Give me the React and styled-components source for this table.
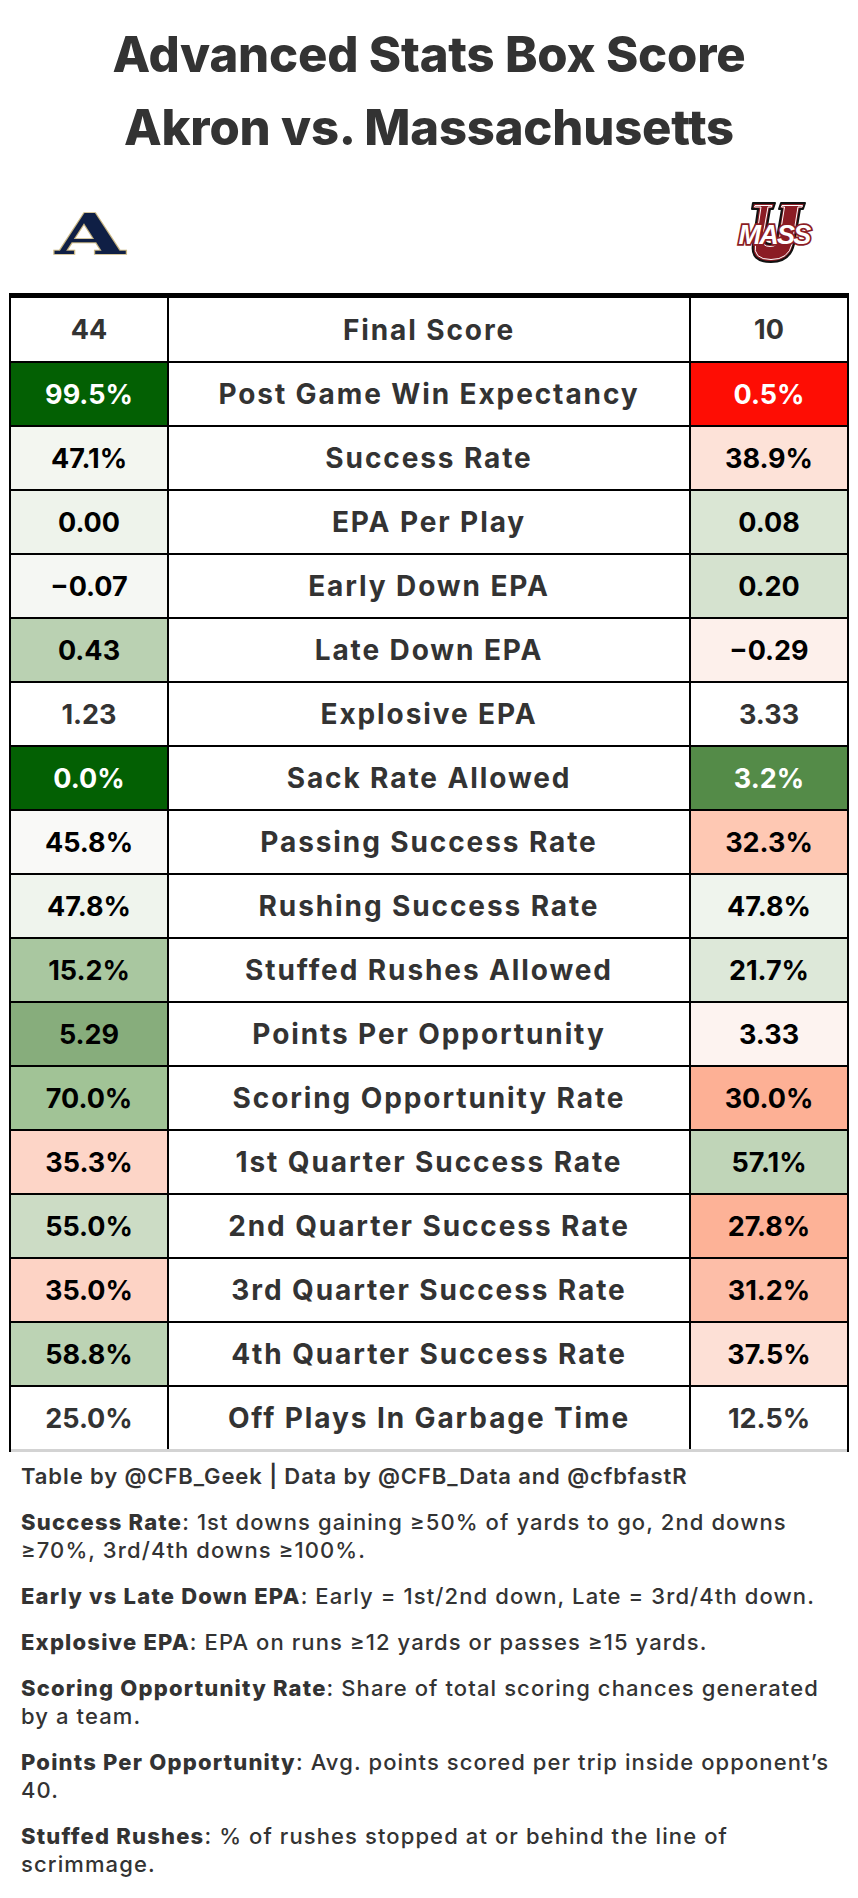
import React from "react";
import styled, { createGlobalStyle } from "styled-components";

const Global = createGlobalStyle`
  html, body { margin: 0; padding: 0; background: #ffffff; }
  body { font-family: Inter, "Open Sans", sans-serif; color: #333333; }
`;

const Page = styled.div`
  width: 858px;
  background: #fff;
  padding-bottom: 20px;
`;

const Title = styled.h1`
  margin: 0;
  padding-top: 18px;
  text-align: center;
  font-family: Inter, sans-serif;
  font-weight: 800;
  font-size: 49px;
  line-height: 73px;
  color: #333;
  letter-spacing: -0.2px;
`;

const LogoRow = styled.div`
  display: flex;
  justify-content: space-between;
  align-items: center;
  height: 129px;
  padding: 8px 44px 0 50px;
  box-sizing: border-box;
`;

const Table = styled.div`
  margin: 0 9px;
  width: 840px;
  box-sizing: border-box;
  border-top: 5px solid #000;
  border-left: 2px solid #000;
  border-right: 2px solid #000;
`;

const Row = styled.div`
  display: grid;
  grid-template-columns: 156px 1fr 156px;
  column-gap: 2px;
  background: #000;
  border-bottom: ${(p) => (p.$last ? "3px solid #d3d3d3" : "2px solid #000")};
`;

const Cell = styled.div`
  height: ${(p) => (p.$tall ? "63px" : "62px")};
  display: flex;
  align-items: center;
  justify-content: center;
  background: ${(p) => p.$bg || "#fff"};
  color: ${(p) => p.$fg || "#000"};
  font-family: Inter, sans-serif;
  font-weight: 700;
  font-size: 27px;
`;

const Label = styled(Cell)`
  color: #333;
  font-size: 28px;
  letter-spacing: 1.9px;
`;

const Footer = styled.div`
  padding: 10px 21px 0 21px;
  font-family: Inter, sans-serif;
  font-size: 22px;
  line-height: 28px;
  letter-spacing: 1.1px;
  color: #333;
`;

const Credit = styled.p`
  margin: 0;
  font-weight: 600;
  letter-spacing: 0.9px;
`;

const Note = styled.p`
  margin: 18px 0 0 0;
  font-weight: 500;
  b { font-weight: 800; letter-spacing: 1.2px; }
`;

const AkronLogo = () => (
  <svg width="80" height="56" viewBox="0 -3 80 56" overflow="visible">
    <g transform="scale(1.6 1)">
      <text
        x="25"
        y="46"
        textAnchor="middle"
        fontFamily="'DejaVu Serif', serif"
        fontWeight="700"
        fontSize="56"
        fill="#0f1f45"
        stroke="#c9b682"
        strokeWidth="1.6"
        paintOrder="stroke"
      >
        A
      </text>
    </g>
  </svg>
);

const UMassLogo = () => (
  <svg width="78" height="62" viewBox="-1 0 78 62" overflow="visible">
    <path
      d="M16 1 H38 L36 7 H33 L28 36 Q27 42 33 42 Q39 42 40 36 L45 7 H42 L44 1 H68 L66 7 H63 L57 42 Q53 60 34 60 Q13 60 16 42 L21 7 H15 Z"
      fill="#8b1c24"
      stroke="#111"
      strokeWidth="2"
      strokeLinejoin="round"
    />
    <path
      d="M18 3.5 H35 L34.5 5 H31 L25.5 36 Q24.5 44.5 33 44.5 Q41.5 44.5 42.5 36 L47.5 5 H44.5 L45 3.5 H65.5 L65 5 H61 L55 42 Q51.5 57.5 34 57.5 Q15.5 57.5 18.5 42 L24 5 H17.5 Z"
      fill="none"
      stroke="#fff"
      strokeWidth="1"
      strokeLinejoin="round"
    />
    <text
      x="37"
      y="42"
      textAnchor="middle"
      fontFamily="'Liberation Sans', Arial, sans-serif"
      fontWeight="700"
      fontStyle="italic"
      fontSize="27"
      fill="#ffffff"
      stroke="#8b1c24"
      strokeWidth="3.5"
      paintOrder="stroke"
      letterSpacing="-1.8"
    >
      MASS
    </text>
  </svg>
);

const rows = [
  ["99.5%", "#036003", "#fff", "Post Game Win Expectancy", "0.5%", "#fe0d04", "#fff"],
  ["47.1%", "#f3f6f0", "#000", "Success Rate", "38.9%", "#fde2d8", "#000"],
  ["0.00", "#eef3eb", "#000", "EPA Per Play", "0.08", "#dae6d4", "#000"],
  ["\u22120.07", "#f5f7f3", "#000", "Early Down EPA", "0.20", "#d5e2cf", "#000"],
  ["0.43", "#bad1b2", "#000", "Late Down EPA", "\u22120.29", "#fdf0eb", "#000"],
  ["1.23", "#fff", "#333", "Explosive EPA", "3.33", "#fff", "#333"],
  ["0.0%", "#036003", "#fff", "Sack Rate Allowed", "3.2%", "#548b48", "#fff"],
  ["45.8%", "#f9f9f7", "#000", "Passing Success Rate", "32.3%", "#fec8b3", "#000"],
  ["47.8%", "#eff4ed", "#000", "Rushing Success Rate", "47.8%", "#eff4ed", "#000"],
  ["15.2%", "#a9c7a0", "#000", "Stuffed Rushes Allowed", "21.7%", "#dde8d9", "#000"],
  ["5.29", "#87ad7c", "#000", "Points Per Opportunity", "3.33", "#fdf3f0", "#000"],
  ["70.0%", "#a1c396", "#000", "Scoring Opportunity Rate", "30.0%", "#fdb095", "#000"],
  ["35.3%", "#fdd5c7", "#000", "1st Quarter Success Rate", "57.1%", "#c0d5b8", "#000"],
  ["55.0%", "#ccdcc5", "#000", "2nd Quarter Success Rate", "27.8%", "#fdb297", "#000"],
  ["35.0%", "#fdd3c5", "#000", "3rd Quarter Success Rate", "31.2%", "#fdbea8", "#000"],
  ["58.8%", "#bcd3b4", "#000", "4th Quarter Success Rate", "37.5%", "#fde0d6", "#000"],
  ["25.0%", "#fff", "#333", "Off Plays In Garbage Time", "12.5%", "#fff", "#333"],
];

export default function App() {
  return (
    <Page>
      <Global />
      <Title>
        Advanced Stats Box Score
        <br />
        Akron vs. Massachusetts
      </Title>
      <LogoRow>
        <AkronLogo />
        <UMassLogo />
      </LogoRow>
      <Table>
        <Row>
          <Cell $tall $fg="#333">44</Cell>
          <Label $tall>Final Score</Label>
          <Cell $tall $fg="#333">10</Cell>
        </Row>
        {rows.map((r, i) => (
          <Row key={r[3]} $last={i === rows.length - 1}>
            <Cell $bg={r[1]} $fg={r[2]}>{r[0]}</Cell>
            <Label>{r[3]}</Label>
            <Cell $bg={r[5]} $fg={r[6]}>{r[4]}</Cell>
          </Row>
        ))}
      </Table>
      <Footer>
        <Credit>Table by @CFB_Geek | Data by @CFB_Data and @cfbfastR</Credit>
        <Note>
          <b>Success Rate</b>: 1st downs gaining ≥50% of yards to go, 2nd downs ≥70%, 3rd/4th downs ≥100%.
        </Note>
        <Note>
          <b>Early vs Late Down EPA</b>: Early = 1st/2nd down, Late = 3rd/4th down.
        </Note>
        <Note>
          <b>Explosive EPA</b>: EPA on runs ≥12 yards or passes ≥15 yards.
        </Note>
        <Note>
          <b>Scoring Opportunity Rate</b>: Share of total scoring chances generated by a team.
        </Note>
        <Note>
          <b>Points Per Opportunity</b>: Avg. points scored per trip inside opponent’s 40.
        </Note>
        <Note>
          <b>Stuffed Rushes</b>: % of rushes stopped at or behind the line of scrimmage.
        </Note>
      </Footer>
    </Page>
  );
}
